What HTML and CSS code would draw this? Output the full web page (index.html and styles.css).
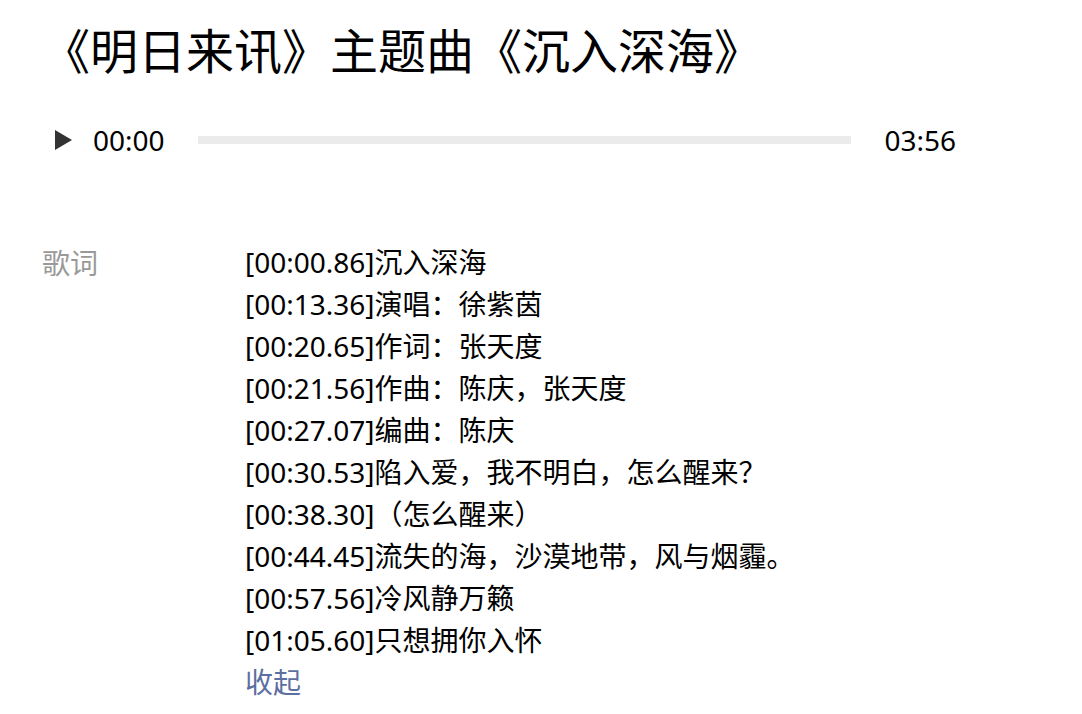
FILE: index.html
```html
<!DOCTYPE html>
<html lang="zh-CN">
<head>
    <meta charset="UTF-8">
    <meta name="viewport" content="width=device-width, initial-scale=1.0">
    <title>沉入深海</title>
    <link rel="stylesheet" href="styles.css">
</head>
<body>
    <h1 class="title">《明日来讯》主题曲《沉入深海》</h1>

    <div class="player">
        <span class="play"></span>
        <span class="time">00:00</span>
        <div class="track"></div>
        <span class="time end">03:56</span>
    </div>

    <div class="lyrics">
        <div class="label">歌词</div>
        <div class="lines">
            <div>[00:00.86]沉入深海</div>
            <div>[00:13.36]演唱：徐紫茵</div>
            <div>[00:20.65]作词：张天度</div>
            <div>[00:21.56]作曲：陈庆，张天度</div>
            <div>[00:27.07]编曲：陈庆</div>
            <div>[00:30.53]陷入爱，我不明白，怎么醒来？</div>
            <div>[00:38.30]（怎么醒来）</div>
            <div>[00:44.45]流失的海，沙漠地带，风与烟霾。</div>
            <div>[00:57.56]冷风静万籁</div>
            <div>[01:05.60]只想拥你入怀</div>
            <a href="#" class="toggle">收起</a>
        </div>
    </div>
</body>
</html>
```

FILE: styles.css
```css
body {
    font-family: "Noto Sans", "Noto Sans CJK SC", sans-serif;
    margin: 0;
    padding: 0 42px;
    color: #000;
    background: #fff;
}
.title {
    font-family: "Noto Sans CJK SC", sans-serif;
    font-size: 48px;
    font-weight: normal;
    margin: 0;
    padding-top: 20px;
    line-height: 56px;
}
.player {
    display: flex;
    align-items: center;
    width: 914px;
    margin-top: 39px;
    height: 50px;
}
.play {
    width: 0;
    height: 0;
    border-top: 10px solid transparent;
    border-bottom: 10px solid transparent;
    border-left: 17px solid #333;
    margin-left: 13px;
    margin-right: 21px;
}
.time {
    font-size: 28px;
}
.track {
    flex: 1;
    height: 8px;
    background: #ebebeb;
    margin: 0 33px;
}
.lyrics {
    display: flex;
    margin-top: 76px;
    font-size: 28px;
    line-height: 42px;
}
.label {
    width: 203px;
    color: #999;
    font-family: "Noto Sans CJK SC", sans-serif;
}
.lines {
    font-family: "Noto Sans", "Noto Sans CJK SC", sans-serif;
}
.toggle {
    color: #5b6fa0;
    text-decoration: none;
}
```
